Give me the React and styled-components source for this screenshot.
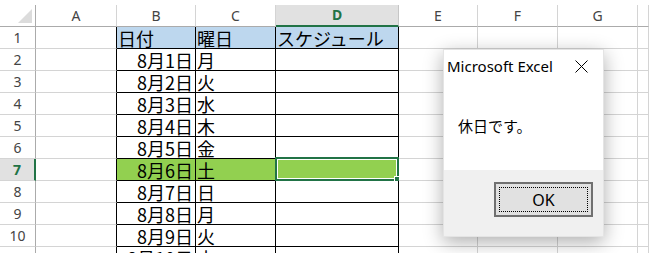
import React from "react";
import styled, { createGlobalStyle, css } from "styled-components";

const GlobalStyle = createGlobalStyle`
  html, body {
    margin: 0;
    padding: 0;
    background: #ffffff;
    overflow: hidden;
  }
  * { box-sizing: border-box; }
`;

const GREEN = "#217346";
const GRID = "#d4d4d4";
const HEAD_LINE = "#ababab";

const Page = styled.div`
  position: relative;
  width: 649px;
  height: 253px;
  overflow: hidden;
  padding-top: 5px;
  background: #fff;
`;

const Sheet = styled.div`
  display: grid;
  grid-template-columns: 36px 81px 79px 80px 123px 79px 80px 80px 1fr;
  grid-auto-rows: 22px;
`;

const Corner = styled.div`
  position: relative;
  border-right: 1px solid ${HEAD_LINE};
  border-bottom: 1px solid ${HEAD_LINE};
  &::after {
    content: "";
    position: absolute;
    right: 3px;
    bottom: 3px;
    width: 14px;
    height: 14px;
    background: #dcdcdc;
    clip-path: polygon(100% 0, 100% 100%, 0 100%);
  }
`;

const ColHead = styled.div`
  display: flex;
  align-items: center;
  justify-content: center;
  font-family: "Noto Sans", "Open Sans", sans-serif;
  font-size: 14px;
  line-height: 20px;
  color: #444;
  border-right: 1px solid ${GRID};
  border-bottom: 1px solid ${HEAD_LINE};
  ${(p) =>
    p.$active &&
    css`
      background: #e1e1e1;
      color: ${GREEN};
      font-weight: 700;
      border-bottom: 2px solid ${GREEN};
      border-right-color: #c6c6c6;
    `}
`;

const RowHead = styled.div`
  display: flex;
  align-items: center;
  justify-content: center;
  font-family: "Noto Sans", "Open Sans", sans-serif;
  font-size: 14px;
  line-height: 20px;
  color: #444;
  border-right: 1px solid ${HEAD_LINE};
  border-bottom: 1px solid ${GRID};
  ${(p) =>
    p.$active &&
    css`
      background: #e1e1e1;
      color: ${GREEN};
      font-weight: 700;
      border-right: 2px solid ${GREEN};
    `}
`;

const fills = {
  head: "#bdd7ee",
  sat: "#92d050",
  none: "#ffffff",
};

const Cell = styled.div`
  position: relative;
  display: flex;
  align-items: flex-end;
  justify-content: ${(p) => (p.$align === "right" ? "flex-end" : "flex-start")};
  padding: 0 2px 0 1px;
  font-family: "Noto Sans CJK JP", "Noto Sans", sans-serif;
  font-size: 18px;
  line-height: 20px;
  color: #000;
  white-space: nowrap;
  background: ${(p) => fills[p.$tone || "none"]};
  border-right: 1px solid ${(p) => (p.$edge || p.$boxed ? "#000" : GRID)};
  border-bottom: 1px solid ${(p) => (p.$boxed ? "#000" : GRID)};
`;

const Selection = styled.div`
  position: absolute;
  top: -2px;
  left: -1px;
  right: -1px;
  bottom: -1px;
  border: 2px solid ${GREEN};
  box-shadow: inset 0 0 0 1px #fff;
`;

const FillHandle = styled.div`
  position: absolute;
  right: -4px;
  bottom: -4px;
  width: 7px;
  height: 7px;
  background: ${GREEN};
  border: 1px solid #fff;
  border-right: none;
  border-bottom: none;
`;

const Dialog = styled.div`
  position: absolute;
  left: 443px;
  top: 49px;
  width: 161px;
  height: 188px;
  display: flex;
  flex-direction: column;
  background: #fff;
  border: 1px solid #e4e4e4;
  box-shadow: 0 5px 18px rgba(0, 0, 0, 0.32);
`;

const TitleBar = styled.div`
  display: flex;
  align-items: center;
  justify-content: space-between;
  height: 32px;
  padding: 0 15px 0 3px;
`;

const Title = styled.span`
  font-family: "Noto Sans", "Open Sans", sans-serif;
  font-size: 15px;
  color: #000;
`;

const Message = styled.div`
  flex: 1;
  padding: 35px 0 0 14px;
  font-family: "Noto Sans CJK JP", "Noto Sans", sans-serif;
  font-size: 15px;
  line-height: 18px;
  color: #000;
`;

const Footer = styled.div`
  height: 66px;
  background: #f0f0f0;
  display: flex;
  justify-content: flex-end;
  align-items: flex-start;
  padding: 12px 10px 0 0;
`;

const OkButton = styled.button`
  position: relative;
  width: 99px;
  height: 35px;
  background: #e1e1e1;
  border: 2px solid #707070;
  font-family: "Noto Sans", "Open Sans", sans-serif;
  font-size: 16px;
  color: #000;
  padding: 0;
  &::after {
    content: "";
    position: absolute;
    inset: 3px;
    border: 1px dotted #000;
  }
`;

const CloseIcon = () => (
  <svg width="13" height="13" viewBox="0 0 13 13">
    <path d="M0.5 0.5 L12.5 12.5 M12.5 0.5 L0.5 12.5" stroke="#000" strokeWidth="1" />
  </svg>
);

const cols = ["A", "B", "C", "D", "E", "F", "G", ""];

const rows = [
  ["日付", "曜日", "スケジュール"],
  ["8月1日", "月"],
  ["8月2日", "火"],
  ["8月3日", "水"],
  ["8月4日", "木"],
  ["8月5日", "金"],
  ["8月6日", "土"],
  ["8月7日", "日"],
  ["8月8日", "月"],
  ["8月9日", "火"],
  ["8月10日", "水"],
];

export default function App() {
  return (
    <Page>
      <GlobalStyle />
      <Sheet>
        <Corner />
        {cols.map((c, i) => (
          <ColHead key={i} $active={c === "D"}>
            {c}
          </ColHead>
        ))}
        {rows.map((r, i) => {
          const n = i + 1;
          const tone = n === 1 ? "head" : n === 7 ? "sat" : "none";
          return (
            <React.Fragment key={n}>
              <RowHead $active={n === 7}>{n}</RowHead>
              <Cell $edge />
              <Cell $boxed $tone={tone} $align={n === 1 ? "left" : "right"}>
                {r[0]}
              </Cell>
              <Cell $boxed $tone={tone}>
                {r[1]}
              </Cell>
              <Cell $boxed $tone={tone}>
                {r[2] || ""}
                {n === 7 && (
                  <Selection>
                    <FillHandle />
                  </Selection>
                )}
              </Cell>
              <Cell />
              <Cell />
              <Cell />
              <Cell />
            </React.Fragment>
          );
        })}
      </Sheet>
      <Dialog>
        <TitleBar>
          <Title>Microsoft Excel</Title>
          <CloseIcon />
        </TitleBar>
        <Message>休日です。</Message>
        <Footer>
          <OkButton>OK</OkButton>
        </Footer>
      </Dialog>
    </Page>
  );
}
